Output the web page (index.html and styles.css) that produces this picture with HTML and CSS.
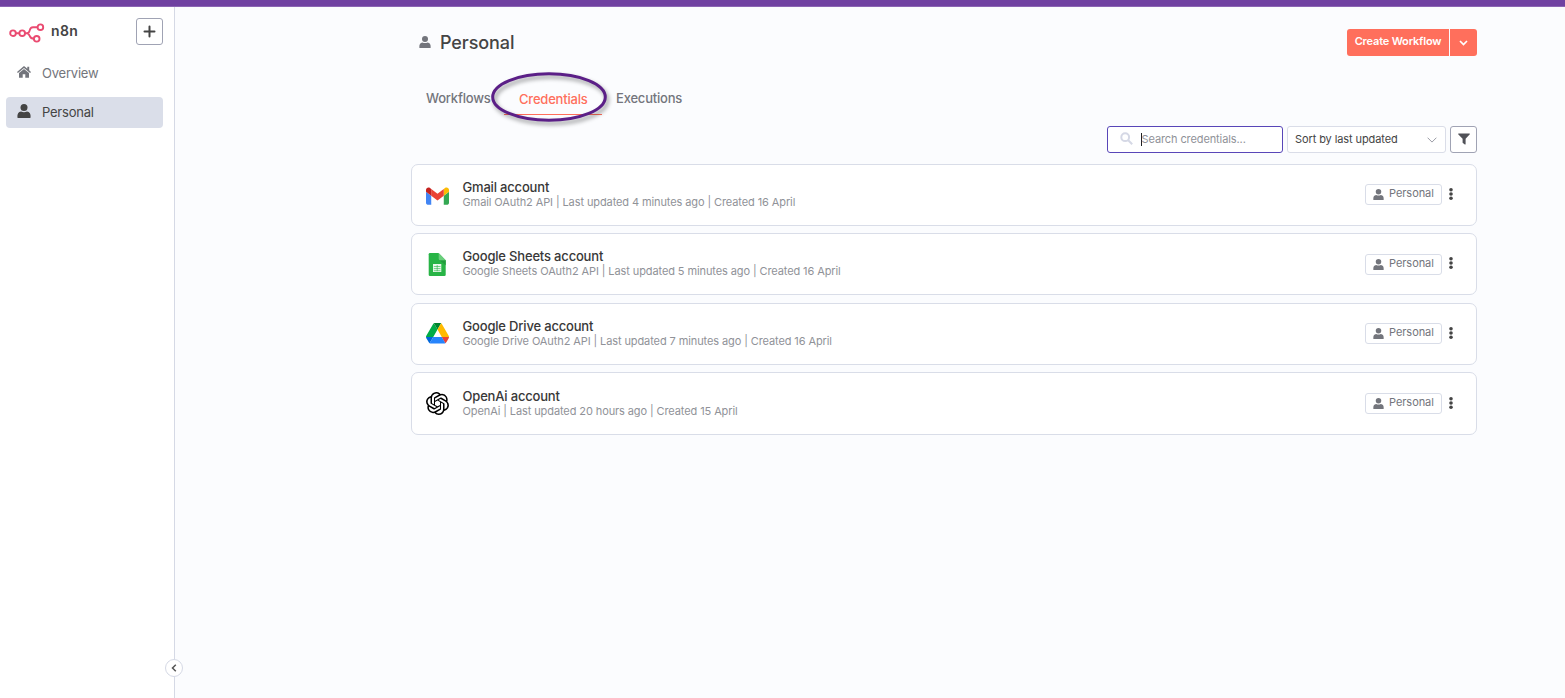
FILE: index.html
```html
<!DOCTYPE html>
<html lang="en">
<head>
<meta charset="utf-8">
<title>n8n - Credentials</title>
<link rel="stylesheet" href="styles.css">
</head>
<body>
<svg width="0" height="0" class="defs">
  <symbol id="user" viewBox="0 0 14 14"><circle cx="7" cy="3.6" r="3.5"/><path d="M.4 13.6Q0 8 4 7.6Q7 9 10 7.6Q14 8 13.6 13.6Q13.5 14 13 14H1Q.5 14 .4 13.6Z"/></symbol>
  <symbol id="dots" viewBox="0 0 4 12"><circle cx="2" cy="1.8" r="1.8"/><circle cx="2" cy="6" r="1.8"/><circle cx="2" cy="10.2" r="1.8"/></symbol>
</svg>
<div class="topbar"></div>
<div class="app">
  <aside class="sidebar">
    <div class="brand">
      <svg class="logo" width="36" height="20" viewBox="0 0 36 20" fill="none" stroke="#ea4b71" stroke-width="1.9"><circle cx="4" cy="10.2" r="2.8"/><circle cx="13.2" cy="10.2" r="2.8"/><circle cx="31.4" cy="4.2" r="2.8"/><circle cx="27.7" cy="15.8" r="2.8"/><path d="M6.8 10.2h3.6M16 10.2h2C22.300 10.200 19 4.200 24 4.200H28.600M18 10.200C21.500 10.200 19.500 15.800 24.900 15.800"/></svg>
      <span class="brand-name">n8n</span>
      <button class="add"><svg width="13" height="13" viewBox="0 0 13 13" stroke="#444" stroke-width="2" stroke-linecap="round"><path d="M6.500 1.500v10M1.500 6.500h10"/></svg></button>
    </div>
    <nav>
      <a class="nav-item"><svg width="14" height="12" viewBox="0 0 14 12" fill="#73757c"><path d="M7 0L0 5.900l.9 1.100L7 2 13.100 7l.9-1.100L12.200 4.300V.8h-1.900v2z"/><path d="M7 3L2 7.100V11.700h3.700V8.200h2.600v3.500H12V7.100z"/></svg><span>Overview</span></a>
      <a class="nav-item active"><svg width="14" height="14" fill="#444"><use href="#user"/></svg><span>Personal</span></a>
    </nav>
    <button class="collapse"><svg width="6" height="8" viewBox="0 0 6 8" fill="none" stroke="#555" stroke-width="1.500"><path d="M4.800.8L1.500 4l3.300 3.200"/></svg></button>
  </aside>
  <main class="main">
    <header class="head">
      <svg width="12" height="12" fill="#73757c"><use href="#user"/></svg>
      <h1>Personal</h1>
      <div class="create"><button class="create-main">Create Workflow</button><button class="create-more"><svg width="9" height="6" viewBox="0 0 9 6" fill="none" stroke="#fff" stroke-width="1.700"><path d="M1 1l3.500 3.500L8 1"/></svg></button></div>
    </header>
    <div class="tabs">
      <a class="tab workflows">Workflows</a>
      <a class="tab credentials">Credentials<svg class="ring" width="130" height="66" viewBox="0 0 130 66"><ellipse cx="60" cy="28" rx="56.300" ry="23.300" fill="none" stroke="#5b1f87" stroke-width="3"/></svg></a>
      <a class="tab executions">Executions</a>
    </div>
    <div class="filters">
      <div class="search"><svg width="13" height="13" viewBox="0 0 13 13" fill="none" stroke="#d5d8e5" stroke-width="2"><circle cx="5.200" cy="5.200" r="3.900"/><path d="M8 8l4.200 4.200"/></svg><i class="caret"></i><span>Search credentials...</span></div>
      <div class="sort"><span>Sort by last updated</span><svg width="10" height="6" viewBox="0 0 10 6" fill="none" stroke="#9a9ca5"><path d="M.6.7L5 5.100 9.400.7"/></svg></div>
      <button class="funnel"><svg width="12" height="12" viewBox="0 0 12 12" fill="#505157"><path d="M.5.400h11q.7.500.1 1.100L7.600 5.700V11.200q-.2.600-.8.300L4.600 9.800V5.700L.400 1.500Q-.1.900.5.400z"/></svg></button>
    </div>
    <section class="cards">
      <article class="card">
        <svg class="service" width="23" height="23" viewBox="52 29 88 88"><path fill="#4285f4" d="M58 108h14V74L52 59v43c0 3.320 2.690 6 6 6"/><path fill="#34a853" d="M120 108h14c3.320 0 6-2.690 6-6V59l-20 15"/><path fill="#fbbc04" d="M120 48v26l20-15v-8c0-7.420-8.470-11.650-14.400-7.200"/><path fill="#ea4335" d="M72 74V48l24 18 24-18v26L96 92"/><path fill="#c5221f" d="M52 51v8l20 15V48l-5.600-4.200c-5.940-4.450-14.400-.22-14.400 7.200"/></svg>
        <div class="info"><h2>Gmail account</h2><p>Gmail OAuth2 API | Last updated 4 minutes ago | Created 16 April</p></div>
        <span class="owner"><svg width="11" height="11"><use href="#user"/></svg><span>Personal</span></span><svg class="more" width="4" height="12"><use href="#dots"/></svg>
      </article>
      <article class="card second">
        <svg class="service" width="23" height="23" viewBox=".5 .5 23 23"><path fill="#28b446" d="M5 .5h8l7.200 7.200v14.500q0 1.300-1.300 1.300H4.500q-1.300 0-1.300-1.300V1.800Q3.200.5 4.500.5z"/><path fill="#219b3c" d="M14 7.700h6.200v5z"/><path fill="#6ace7c" d="M13.200.5l7 7.200h-5.500q-1.500 0-1.500-1.500z"/><path fill="#eaf8ec" d="M7.500 11.500h8.300v8H7.500z"/><path stroke="#28b446" stroke-width=".6" d="M8.300 14h6.700M8.300 16.100h6.700M8.300 18.200h6.700M11.700 12.500v6.200"/></svg>
        <div class="info"><h2>Google Sheets account</h2><p>Google Sheets OAuth2 API | Last updated 5 minutes ago | Created 16 April</p></div>
        <span class="owner"><svg width="11" height="11"><use href="#user"/></svg><span>Personal</span></span><svg class="more" width="4" height="12"><use href="#dots"/></svg>
      </article>
      <article class="card third">
        <svg class="service" width="23" height="23" viewBox="0 0 87.300 87.300"><path d="m6.600 66.850 3.850 6.650c.8 1.400 1.950 2.500 3.300 3.300l13.750-23.800h-27.500c0 1.550.4 3.100 1.200 4.500z" fill="#0066da"/><path d="m43.650 25-13.750-23.800c-1.350.8-2.500 1.900-3.300 3.300l-25.400 44a9.060 9.060 0 0 0 -1.200 4.500h27.500z" fill="#00ac47"/><path d="m73.550 76.800c1.350-.8 2.500-1.900 3.300-3.300l1.600-2.750 7.650-13.250c.8-1.400 1.200-2.950 1.200-4.500h-27.502l5.852 11.500z" fill="#ea4335"/><path d="m43.650 25 13.750-23.800c-1.350-.8-2.900-1.200-4.500-1.200h-18.500c-1.600 0-3.150.45-4.500 1.200z" fill="#00832d"/><path d="m59.800 53h-32.300l-13.750 23.800c1.350.8 2.900 1.200 4.500 1.200h50.800c1.600 0 3.150-.45 4.500-1.200z" fill="#2684fc"/><path d="m73.400 26.500-12.700-22c-.8-1.400-1.950-2.500-3.300-3.300l-13.750 23.800 16.150 28h27.450c0-1.550-.4-3.100-1.200-4.500z" fill="#ffba00"/></svg>
        <div class="info"><h2>Google Drive account</h2><p>Google Drive OAuth2 API | Last updated 7 minutes ago | Created 16 April</p></div>
        <span class="owner"><svg width="11" height="11"><use href="#user"/></svg><span>Personal</span></span><svg class="more" width="4" height="12"><use href="#dots"/></svg>
      </article>
      <article class="card fourth">
        <svg class="service" width="23" height="23" viewBox="0 0 24 24"><path d="M22.2819 9.8211a5.9847 5.9847 0 0 0-.5157-4.9108 6.0462 6.0462 0 0 0-6.5098-2.9A6.0651 6.0651 0 0 0 4.9807 4.1818a5.9847 5.9847 0 0 0-3.9977 2.9 6.0462 6.0462 0 0 0 .7427 7.0966 5.98 5.98 0 0 0 .511 4.9107 6.051 6.051 0 0 0 6.5146 2.9001A5.9847 5.9847 0 0 0 13.2599 24a6.0557 6.0557 0 0 0 5.7718-4.2058 5.9894 5.9894 0 0 0 3.9977-2.9001 6.0557 6.0557 0 0 0-.7475-7.073zm-9.022 12.6081a4.4755 4.4755 0 0 1-2.8764-1.0408l.1419-.0804 4.7783-2.7582a.7948.7948 0 0 0 .3927-.6813v-6.7369l2.02 1.1686a.071.071 0 0 1 .038.052v5.5826a4.504 4.504 0 0 1-4.4945 4.4944zm-9.6607-4.1254a4.4708 4.4708 0 0 1-.5346-3.0137l.142.0852 4.783 2.7582a.7712.7712 0 0 0 .7806 0l5.8428-3.3685v2.3324a.0804.0804 0 0 1-.0332.0615L9.74 19.9502a4.4992 4.4992 0 0 1-6.1408-1.6464zM2.3408 7.8956a4.485 4.485 0 0 1 2.3655-1.9728V11.6a.7664.7664 0 0 0 .3879.6765l5.8144 3.3543-2.0201 1.1685a.0757.0757 0 0 1-.071 0l-4.8303-2.7865A4.504 4.504 0 0 1 2.3408 7.872zm16.5963 3.8558L13.1038 8.364 15.1192 7.2a.0757.0757 0 0 1 .071 0l4.8303 2.7913a4.4944 4.4944 0 0 1-.6765 8.1042v-5.6772a.79.79 0 0 0-.407-.667zm2.0107-3.0231l-.142-.0852-4.7735-2.7818a.7759.7759 0 0 0-.7854 0L9.409 9.2297V6.8974a.0662.0662 0 0 1 .0284-.0615l4.8303-2.7866a4.4992 4.4992 0 0 1 6.6802 4.66zM8.3065 12.863l-2.02-1.1638a.0804.0804 0 0 1-.038-.0567V6.0742a4.4992 4.4992 0 0 1 7.3757-3.4537l-.142.0805L8.704 5.459a.7948.7948 0 0 0-.3927.6813zm1.0976-2.3654l2.602-1.4998 2.6069 1.4998v2.9994l-2.5974 1.4997-2.6067-1.4997Z"/></svg>
        <div class="info"><h2>OpenAi account</h2><p>OpenAi | Last updated 20 hours ago | Created 15 April</p></div>
        <span class="owner"><svg width="11" height="11"><use href="#user"/></svg><span>Personal</span></span><svg class="more" width="4" height="12"><use href="#dots"/></svg>
      </article>
    </section>
  </main>
</div>
</body>
</html>
```
FILE: styles.css
```css
* { box-sizing: border-box; }
body { margin: 0; height: 698px; overflow: hidden; font-family: Inter, sans-serif; background: #fbfcfe; color: #444; }
h1, h2, p { margin: 0; }
button { font: inherit; padding: 0; margin: 0; }
svg { display: block; flex: none; }
.defs { position: absolute; }
.topbar { height: 7px; background: #7041a1; border-bottom: 1px solid #8b65b3; }
.app { display: flex; height: 691px; }
.sidebar { width: 175px; flex: none; background: #fff; border-right: 1px solid #d5d9e5; position: relative; }
.brand { display: flex; height: 49px; padding: 11px 11px 0 8.500px; }
.logo { margin-top: 5px; }
.brand-name { font-size: 14px; font-weight: 600; line-height: 17px; margin: 4px 0 0 6.500px; letter-spacing: .4px; }
.add, .funnel { width: 27px; height: 27px; border: 1px solid #a0a3b4; border-radius: 3px; background: #fff; display: flex; align-items: center; justify-content: center; }
.add { margin-left: auto; }
.funnel { padding-bottom: 1px; }
nav { padding: 2px 11px 0 6px; }
.nav-item { display: flex; align-items: center; height: 31px; padding: 0 0 2px 11px; margin-bottom: 8px; border-radius: 4px; font-size: 13px; letter-spacing: -.22px; color: #73757c; }
.nav-item svg { margin-bottom: 2px; }
.nav-item span { margin-left: 11px; }
.active { background: #dadee9; color: #444; }
.collapse { position: absolute; right: -9px; top: 652px; width: 18px; height: 18px; border: 1px solid #d5d9e5; border-radius: 50%; background: #fff; display: flex; align-items: center; justify-content: center; }
.main { width: 1066px; margin-left: 236px; }
.head { display: flex; height: 71px; padding: 22px 0 0 8px; }
.head > svg { margin-top: 7px; }
h1 { font-size: 18px; line-height: 22px; font-weight: 500; letter-spacing: -.1px; margin: 3px 0 0 9px; }
.create { display: flex; gap: 1px; margin-left: auto; height: 27px; }
.create button { border: 0; background: #ff6f5c; color: #fff; display: flex; justify-content: center; align-items: center; }
.create .create-main { width: 102px; border-radius: 3px 0 0 3px; font-size: 11px; font-weight: 600; letter-spacing: -.18px; padding-bottom: 3px; }
.create .create-more { width: 27px; border-radius: 0 3px 3px 0; }
.tabs { display: flex; height: 48px; padding: 11px 0 0 15px; font-size: 13px; font-weight: 500; line-height: 18px; letter-spacing: -.2px; color: #73757c; }
.workflows { width: 78px; }
.credentials { width: 98px; height: 26px; padding: 1px 0 0 15px; color: #ff6f5c; border-bottom: 1px solid #ff6f5c; position: relative; }
.executions { margin-left: 14px; }
.ring { position: absolute; left: -15px; top: -20px; filter: drop-shadow(2px 3px 2px rgba(0,0,0,.4)); }
.filters { display: flex; justify-content: flex-end; gap: 4px; font-size: 11px; letter-spacing: -.1px; }
.search { width: 176px; height: 27px; border: 1px solid #5846b8; border-radius: 3px; background: #fff; display: flex; align-items: center; padding-left: 12px; color: #909298; }
.search svg { margin-bottom: 3px; }
.search span, .sort span { margin-bottom: 2px; }
.caret { width: 1px; height: 13px; background: #222; margin: 0 -.500px 0 8px; }
.sort { width: 159px; height: 27px; border: 1px solid #dadde8; border-radius: 3px; background: #fff; display: flex; align-items: center; justify-content: space-between; padding: 0 8px 0 7px; color: #444; }
.cards { padding-top: 11px; }
.card { display: flex; height: 62px; border: 1px solid #d9dde8; border-radius: 7px; background: #fff; padding: 0 23px 0 14px; }
.second, .fourth { margin-top: 7px; }
.third { margin-top: 8px; }
.fourth { height: 63px; }
.service { margin-top: 19px; }
.info { margin: 14px 0 0 13.500px; }
.fourth .info { margin-top: 15px; }
h2 { font-size: 13px; font-weight: 500; line-height: 16px; letter-spacing: -.18px; color: #383838; }
.info p { font-size: 11px; line-height: 14px; letter-spacing: -.1px; color: #909298; white-space: nowrap; }
.owner { width: 77px; height: 21px; margin: 19px 0 0 auto; border: 1px solid #d9dde8; border-radius: 3px; display: flex; align-items: center; gap: 5px; padding: 0 0 2px 7px; font-size: 11px; letter-spacing: -.05px; color: #73757c; }
.owner span { margin-bottom: 1px; }
.owner svg { fill: #73757c; margin-top: 2px; }
.second .owner, .fourth .owner { margin-top: 20px; }
.more { margin: 23px 0 0 7px; fill: #444; }
.fourth .more { margin-top: 24px; }
```
